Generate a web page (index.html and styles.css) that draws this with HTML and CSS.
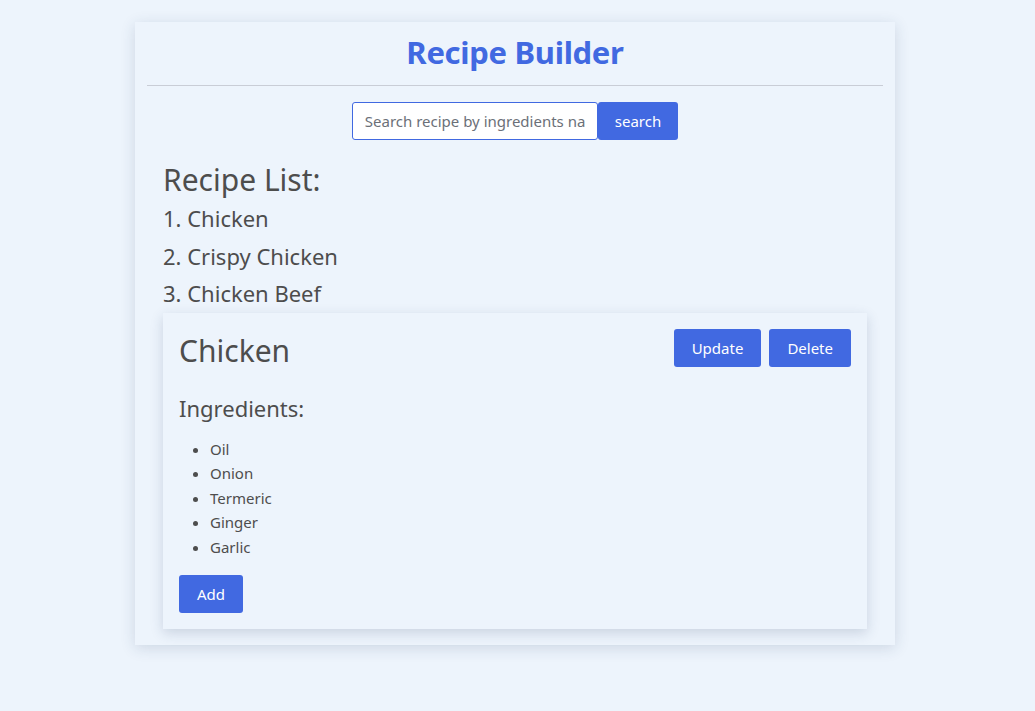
FILE: index.html
```html
<!DOCTYPE html>
<html lang="en">
<head>
<meta charset="utf-8">
<title>Recipe Builder</title>
<link rel="stylesheet" href="styles.css">
</head>
<body>
<div class="app">
  <h1 class="title">Recipe Builder</h1>
  <hr class="divider">
  <form class="search">
    <input class="search-input" type="text" placeholder="Search recipe by ingredients name">
    <button class="btn btn-search" type="button">search</button>
  </form>
  <section class="content">
    <h2 class="list-title">Recipe List:</h2>
    <ol class="recipes">
      <li>1. Chicken</li>
      <li>2. Crispy Chicken</li>
      <li>3. Chicken Beef</li>
    </ol>
    <div class="card">
      <div class="card-head">
        <h3 class="card-title">Chicken</h3>
        <div class="actions">
          <button class="btn" type="button">Update</button>
          <button class="btn" type="button">Delete</button>
        </div>
      </div>
      <h4 class="ing-title">Ingredients:</h4>
      <ul class="ingredients">
        <li>Oil</li>
        <li>Onion</li>
        <li>Termeric</li>
        <li>Ginger</li>
        <li>Garlic</li>
      </ul>
      <button class="btn" type="button">Add</button>
    </div>
  </section>
</div>
</body>
</html>
```
FILE: styles.css
```css
* { box-sizing: border-box; }
html, body { margin: 0; padding: 0; }
body {
  background: #edf4fc;
  font-family: "Noto Sans", "Open Sans", sans-serif;
  color: #4d4d4d;
  padding: 22px 5px 40px 0;
}
.app {
  width: 760px;
  margin: 0 auto;
  background: #edf4fc;
  padding: 10px 12px 16px;
  box-shadow: 0 3px 14px rgba(40, 60, 100, 0.16);
}
.title {
  margin: 0;
  text-align: center;
  color: #4169e1;
  font-size: 31px;
  line-height: 40px;
  font-weight: 700;
  letter-spacing: -0.3px;
}
.divider {
  margin: 13px 0 0;
  border: 0;
  border-top: 1px solid #c9cdd6;
  height: 0;
}
.search {
  display: flex;
  justify-content: center;
  margin: 16px 0 0;
}
.search-input {
  width: 246px;
  height: 38px;
  border: 1px solid #4169e1;
  border-radius: 3px;
  background: #fff;
  padding: 0 12px;
  font-family: inherit;
  font-size: 15px;
  color: #4d4d4d;
  outline: none;
}
.search-input::placeholder { color: #6b7078; }
.btn {
  height: 38px;
  padding: 0 18px;
  border: 0;
  border-radius: 3px;
  background: #4169e1;
  color: #fff;
  font-family: inherit;
  font-size: 15px;
  cursor: pointer;
}
.btn-search { padding: 0 17px; }
.content { padding: 0 16px; }
.list-title {
  margin: 20px 0 0;
  font-size: 30px;
  line-height: 40px;
  font-weight: 400;
}
.recipes {
  list-style: none;
  margin: 0;
  padding: 0;
  font-size: 22px;
  line-height: 37.5px;
}
.card {
  background: #edf4fc;
  padding: 16px;
  box-shadow: 0 4px 12px rgba(40, 60, 100, 0.18);
}
.card-head {
  display: flex;
  justify-content: space-between;
  align-items: flex-start;
}
.card-title {
  margin: 2px 0 0;
  font-size: 30px;
  line-height: 40px;
  font-weight: 400;
}
.actions { display: flex; gap: 8px; }
.ing-title {
  margin: 21px 0 0;
  font-size: 22px;
  line-height: 32px;
  font-weight: 400;
}
.ingredients {
  margin: 13px 0 16px;
  padding-left: 31px;
  font-size: 15px;
  line-height: 24.5px;
}
```
